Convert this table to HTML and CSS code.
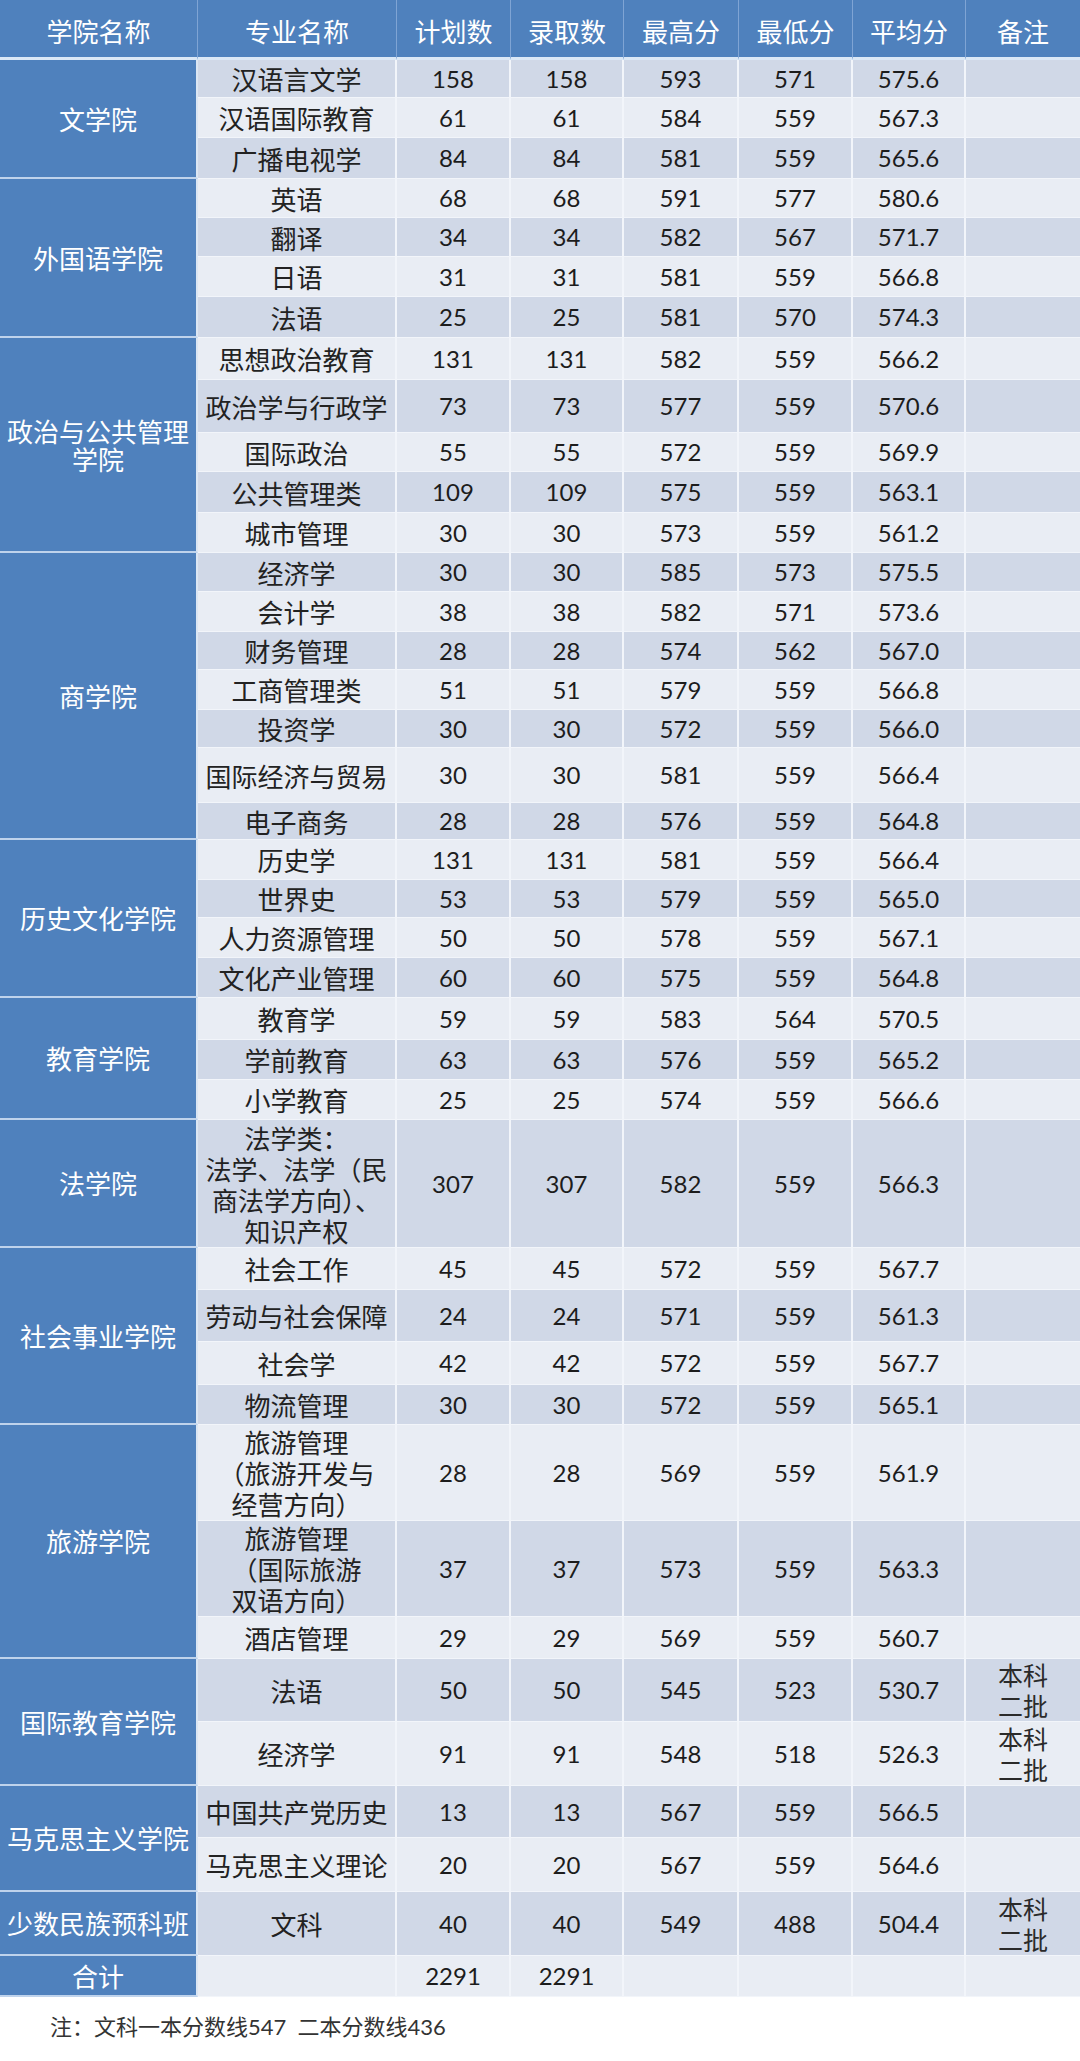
FILE: index.html
```html
<!DOCTYPE html>
<html lang="zh-CN">
<head>
<meta charset="utf-8">
<title>录取分数统计</title>
<link rel="stylesheet" href="styles.css">
</head>
<body>
<table class="score-table">
  <colgroup>
    <col class="w-college"><col class="w-major"><col class="w-114"><col class="w-113"><col class="w-115"><col class="w-114"><col class="w-113"><col class="w-114">
  </colgroup>
  <thead>
    <tr class="head">
      <th>学院名称</th><th>专业名称</th><th>计划数</th><th>录取数</th><th>最高分</th><th>最低分</th><th>平均分</th><th>备注</th>
    </tr>
  </thead>
  <tbody>
    <tr class="h38"><td class="college" rowspan="3">文学院</td><td class="major">汉语言文学</td><td>158</td><td>158</td><td>593</td><td>571</td><td>575.6</td><td></td></tr>
    <tr class="h40"><td class="major">汉语国际教育</td><td>61</td><td>61</td><td>584</td><td>559</td><td>567.3</td><td></td></tr>
    <tr class="h41"><td class="major">广播电视学</td><td>84</td><td>84</td><td>581</td><td>559</td><td>565.6</td><td></td></tr>

    <tr class="h39"><td class="college" rowspan="4">外国语学院</td><td class="major">英语</td><td>68</td><td>68</td><td>591</td><td>577</td><td>580.6</td><td></td></tr>
    <tr class="h39"><td class="major">翻译</td><td>34</td><td>34</td><td>582</td><td>567</td><td>571.7</td><td></td></tr>
    <tr class="h40"><td class="major">日语</td><td>31</td><td>31</td><td>581</td><td>559</td><td>566.8</td><td></td></tr>
    <tr class="h41"><td class="major">法语</td><td>25</td><td>25</td><td>581</td><td>570</td><td>574.3</td><td></td></tr>

    <tr class="h42"><td class="college" rowspan="5">政治与公共管理学院</td><td class="major">思想政治教育</td><td>131</td><td>131</td><td>582</td><td>559</td><td>566.2</td><td></td></tr>
    <tr class="h53"><td class="major">政治学与行政学</td><td>73</td><td>73</td><td>577</td><td>559</td><td>570.6</td><td></td></tr>
    <tr class="h39"><td class="major">国际政治</td><td>55</td><td>55</td><td>572</td><td>559</td><td>569.9</td><td></td></tr>
    <tr class="h41"><td class="major">公共管理类</td><td>109</td><td>109</td><td>575</td><td>559</td><td>563.1</td><td></td></tr>
    <tr class="h40"><td class="major">城市管理</td><td>30</td><td>30</td><td>573</td><td>559</td><td>561.2</td><td></td></tr>

    <tr class="h39"><td class="college" rowspan="7">商学院</td><td class="major">经济学</td><td>30</td><td>30</td><td>585</td><td>573</td><td>575.5</td><td></td></tr>
    <tr class="h40"><td class="major">会计学</td><td>38</td><td>38</td><td>582</td><td>571</td><td>573.6</td><td></td></tr>
    <tr class="h38"><td class="major">财务管理</td><td>28</td><td>28</td><td>574</td><td>562</td><td>567.0</td><td></td></tr>
    <tr class="h40"><td class="major">工商管理类</td><td>51</td><td>51</td><td>579</td><td>559</td><td>566.8</td><td></td></tr>
    <tr class="h38"><td class="major">投资学</td><td>30</td><td>30</td><td>572</td><td>559</td><td>566.0</td><td></td></tr>
    <tr class="h55"><td class="major">国际经济与贸易</td><td>30</td><td>30</td><td>581</td><td>559</td><td>566.4</td><td></td></tr>
    <tr class="h37"><td class="major">电子商务</td><td>28</td><td>28</td><td>576</td><td>559</td><td>564.8</td><td></td></tr>

    <tr class="h40"><td class="college" rowspan="4">历史文化学院</td><td class="major">历史学</td><td>131</td><td>131</td><td>581</td><td>559</td><td>566.4</td><td></td></tr>
    <tr class="h38"><td class="major">世界史</td><td>53</td><td>53</td><td>579</td><td>559</td><td>565.0</td><td></td></tr>
    <tr class="h40"><td class="major">人力资源管理</td><td>50</td><td>50</td><td>578</td><td>559</td><td>567.1</td><td></td></tr>
    <tr class="h40"><td class="major">文化产业管理</td><td>60</td><td>60</td><td>575</td><td>559</td><td>564.8</td><td></td></tr>

    <tr class="h42"><td class="college" rowspan="3">教育学院</td><td class="major">教育学</td><td>59</td><td>59</td><td>583</td><td>564</td><td>570.5</td><td></td></tr>
    <tr class="h40"><td class="major">学前教育</td><td>63</td><td>63</td><td>576</td><td>559</td><td>565.2</td><td></td></tr>
    <tr class="h40"><td class="major">小学教育</td><td>25</td><td>25</td><td>574</td><td>559</td><td>566.6</td><td></td></tr>

    <tr class="h128"><td class="college">法学院</td><td class="major"><span class="ln">法学类：</span><span class="ln">法学、法学（民</span><span class="ln">商法学方向）、</span><span class="ln">知识产权</span></td><td>307</td><td>307</td><td>582</td><td>559</td><td>566.3</td><td></td></tr>

    <tr class="h42"><td class="college" rowspan="4">社会事业学院</td><td class="major">社会工作</td><td>45</td><td>45</td><td>572</td><td>559</td><td>567.7</td><td></td></tr>
    <tr class="h52"><td class="major">劳动与社会保障</td><td>24</td><td>24</td><td>571</td><td>559</td><td>561.3</td><td></td></tr>
    <tr class="h43"><td class="major">社会学</td><td>42</td><td>42</td><td>572</td><td>559</td><td>567.7</td><td></td></tr>
    <tr class="h40"><td class="major">物流管理</td><td>30</td><td>30</td><td>572</td><td>559</td><td>565.1</td><td></td></tr>

    <tr class="h96"><td class="college" rowspan="3">旅游学院</td><td class="major"><span class="ln">旅游管理</span><span class="ln">（旅游开发与</span><span class="ln">经营方向）</span></td><td>28</td><td>28</td><td>569</td><td>559</td><td>561.9</td><td></td></tr>
    <tr class="h96"><td class="major"><span class="ln">旅游管理</span><span class="ln">（国际旅游</span><span class="ln">双语方向）</span></td><td>37</td><td>37</td><td>573</td><td>559</td><td>563.3</td><td></td></tr>
    <tr class="h42"><td class="major">酒店管理</td><td>29</td><td>29</td><td>569</td><td>559</td><td>560.7</td><td></td></tr>

    <tr class="h63"><td class="college" rowspan="2">国际教育学院</td><td class="major">法语</td><td>50</td><td>50</td><td>545</td><td>523</td><td>530.7</td><td class="note"><span class="ln">本科</span><span class="ln">二批</span></td></tr>
    <tr class="h64"><td class="major">经济学</td><td>91</td><td>91</td><td>548</td><td>518</td><td>526.3</td><td class="note"><span class="ln">本科</span><span class="ln">二批</span></td></tr>

    <tr class="h52"><td class="college" rowspan="2">马克思主义学院</td><td class="major">中国共产党历史</td><td>13</td><td>13</td><td>567</td><td>559</td><td>566.5</td><td></td></tr>
    <tr class="h54"><td class="major">马克思主义理论</td><td>20</td><td>20</td><td>567</td><td>559</td><td>564.6</td><td></td></tr>

    <tr class="h64"><td class="college">少数民族预科班</td><td class="major">文科</td><td>40</td><td>40</td><td>549</td><td>488</td><td>504.4</td><td class="note"><span class="ln">本科</span><span class="ln">二批</span></td></tr>

    <tr class="h41"><td class="college">合计</td><td class="major"></td><td>2291</td><td>2291</td><td></td><td></td><td></td><td></td></tr>
  </tbody>
</table>
<p class="footnote">注：文科一本分数线547&nbsp;&nbsp;二本分数线436</p>
</body>
</html>
```

FILE: styles.css
```css
* {
  box-sizing: border-box;
}

body {
  margin: 0;
  background: #ffffff;
  font-family: Lato, "Noto Sans CJK SC", sans-serif;
  color: #1f1f1f;
}

.score-table {
  width: 1080px;
  table-layout: fixed;
  border-collapse: separate;
  border-spacing: 0;
}

.w-college { width: 198px; }
.w-major { width: 199px; }
.w-113 { width: 113px; }
.w-114 { width: 114px; }
.w-115 { width: 115px; }

.head {
  height: 60px;
}

.score-table th {
  padding: 4px 0 0;
  background: #4f81bd;
  color: #ffffff;
  font-family: "Noto Sans CJK SC", sans-serif;
  font-weight: 400;
  font-size: 26px;
  line-height: 30px;
  text-align: center;
  vertical-align: middle;
  border-right: 1px solid #7fa4d4;
  border-bottom: 3px solid #dbe8f6;
}

.score-table th:last-child {
  border-right: none;
}

.score-table tbody tr:nth-child(odd) {
  background: #d0d8e7;
}

.score-table tbody tr:nth-child(even) {
  background: #e9edf4;
}

.score-table td {
  padding: 0;
  text-align: center;
  vertical-align: middle;
  font-size: 24px;
  line-height: 30px;
  color: #1c1c1c;
  border-right: 2px solid #f2f5fa;
  border-bottom: 1px solid #f2f5fa;
}

.score-table td:last-child {
  border-right: none;
}

.score-table td.college {
  background: #4f81bd;
  color: #ffffff;
  font-family: "Noto Sans CJK SC", sans-serif;
  font-size: 26px;
  line-height: 28px;
  border-right: 2px solid #dbe6f3;
  border-bottom: 2px solid #bfd3ec;
}

.score-table td.major {
  font-family: "Noto Sans CJK SC", sans-serif;
  font-size: 26px;
  line-height: 31px;
  color: #222222;
}

.score-table td.note {
  font-family: "Noto Sans CJK SC", sans-serif;
  font-size: 25px;
  line-height: 31px;
  color: #2a2a2a;
}

.ln {
  display: block;
  height: 31px;
  overflow: visible;
}

.h37 { height: 37px; }
.h38 { height: 38px; }
.h39 { height: 39px; }
.h40 { height: 40px; }
.h41 { height: 41px; }
.h42 { height: 42px; }
.h43 { height: 43px; }
.h52 { height: 52px; }
.h53 { height: 53px; }
.h54 { height: 54px; }
.h55 { height: 55px; }
.h63 { height: 63px; }
.h64 { height: 64px; }
.h96 { height: 96px; }
.h128 { height: 128px; }

.footnote {
  margin: 15px 0 0 50px;
  font-family: Lato, "Noto Sans CJK SC", sans-serif;
  font-size: 22px;
  line-height: 30px;
  color: #333333;
}
```
